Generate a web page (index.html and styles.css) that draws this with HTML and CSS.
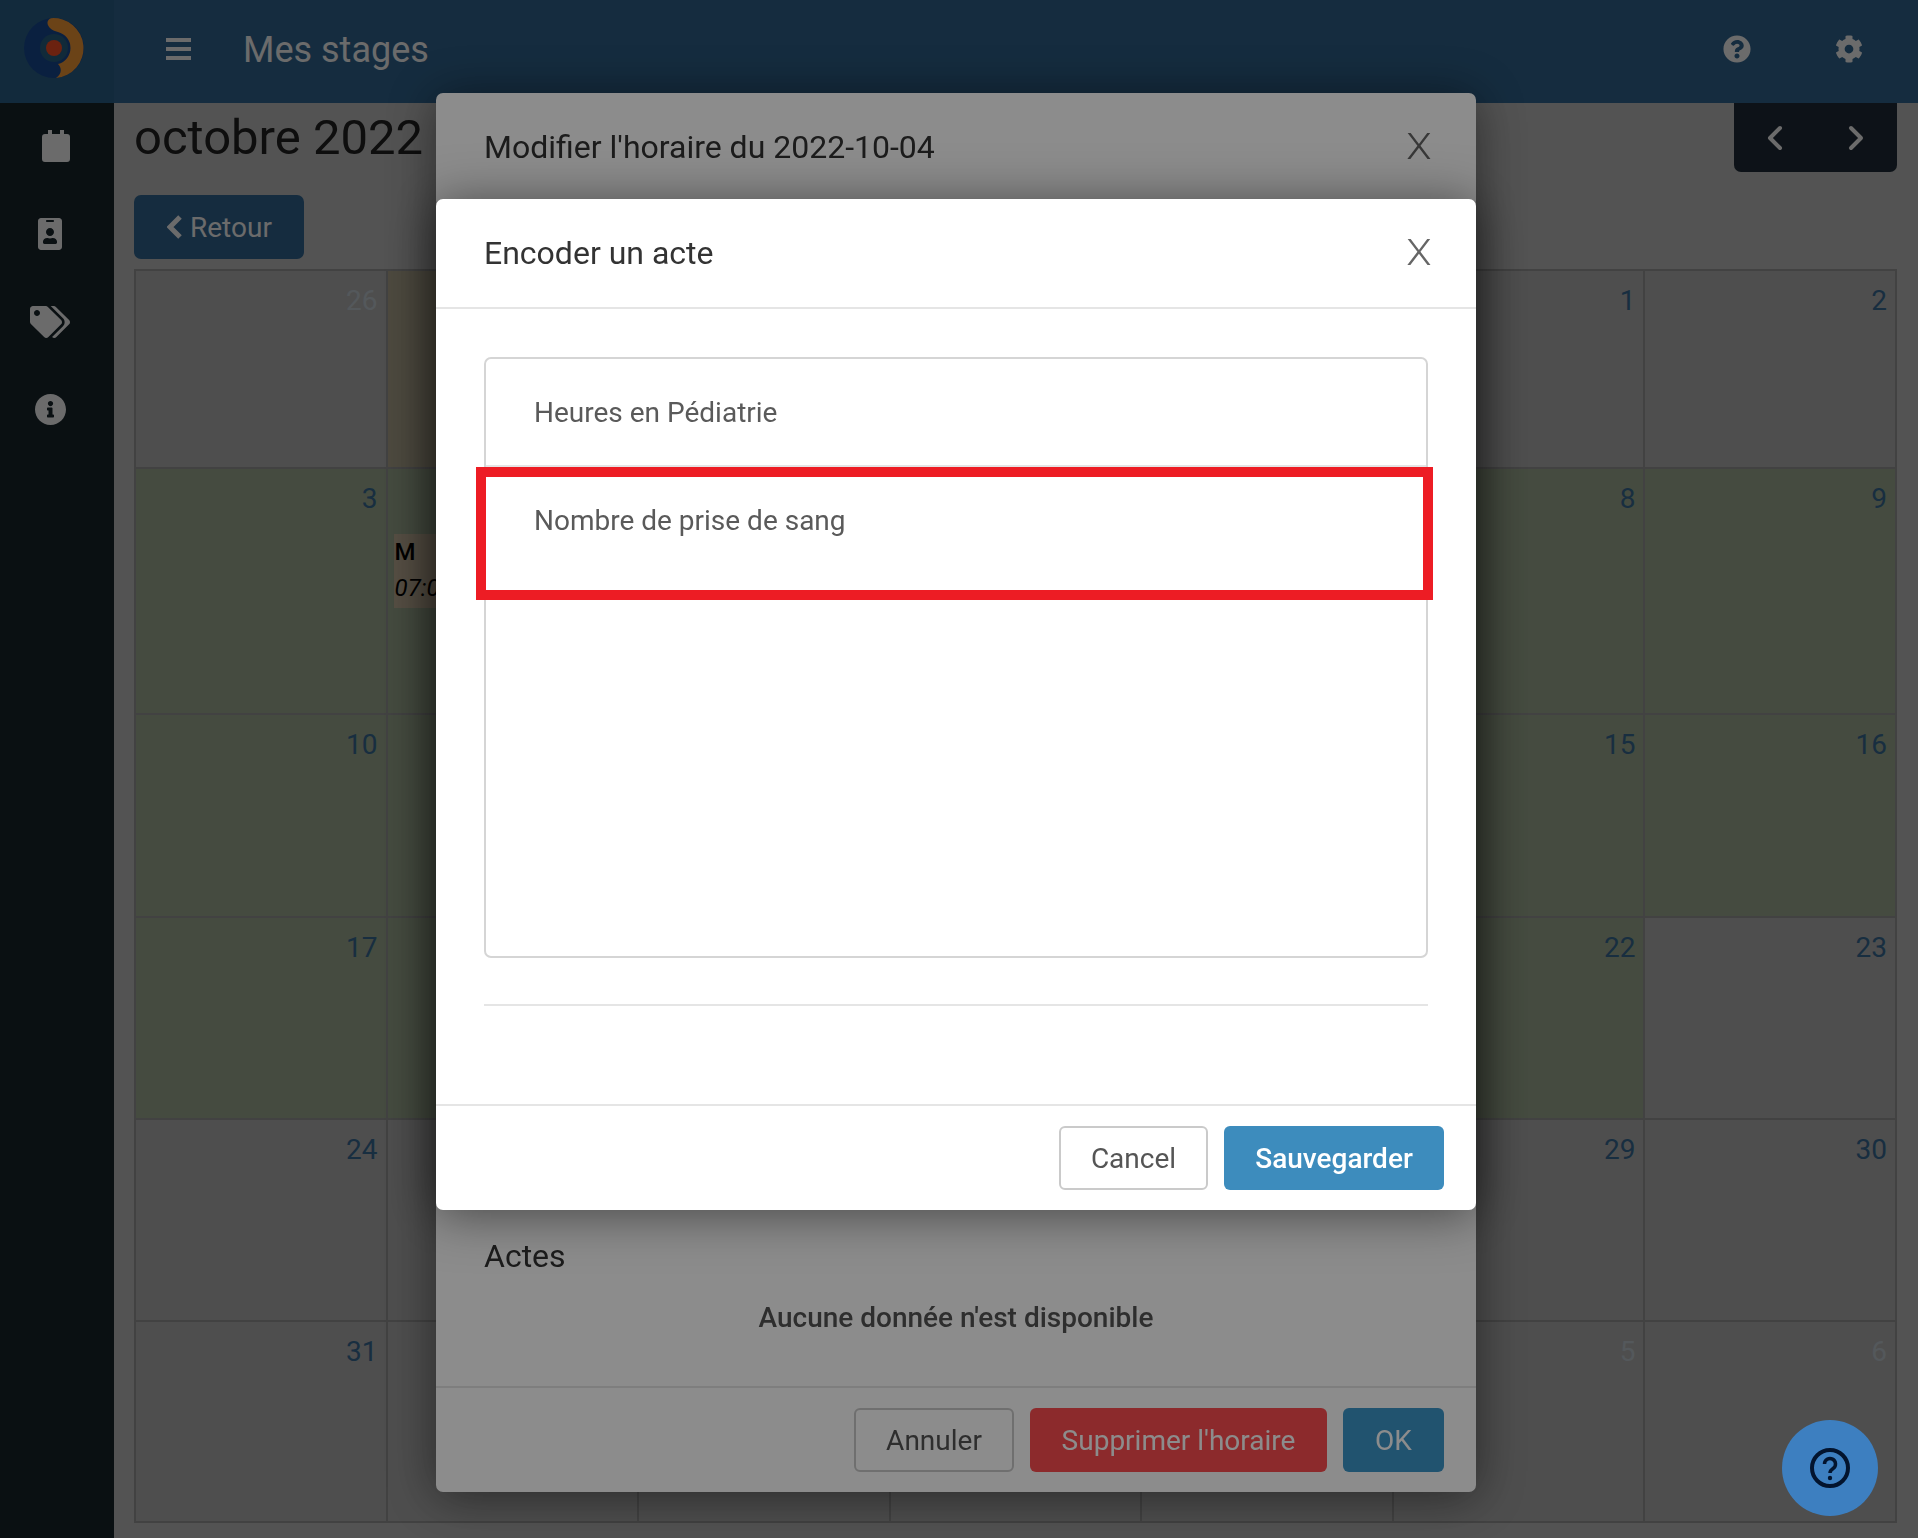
FILE: index.html
```html
<!DOCTYPE html>
<html lang="fr">
<head>
    <meta charset="UTF-8">
    <meta name="viewport" content="width=device-width, initial-scale=1.0">
    <title>Mes stages</title>
    <link rel="stylesheet" href="styles.css">
</head>
<body>

    <div class="page">
        <div class="logo-cell">
            <svg class="logo" viewBox="0 0 60 60">
                <circle class="logo-navy" cx="30" cy="30" r="30"/>
                <path class="logo-orange" d="M27 .2A30 30 0 0 1 32 60C38 56 38 50 34 46A16.500 16.500 0 0 0 34 14C24 12 20 3 27 .2Z"/>
                <circle class="logo-ring" cx="30" cy="30" r="14"/>
                <circle class="logo-dot" cx="30" cy="30" r="8"/>
            </svg>
        </div>

        <header class="topbar">
            <svg class="burger" viewBox="0 0 25 22"><path d="M0 0h25v4H0zM0 9h25v4H0zM0 18h25v4H0z"/></svg>
            <span class="topbar-title">Mes stages</span>
            <div class="topbar-icons">
                <svg class="top-icon" viewBox="0 0 512 512"><path d="M504 256c0 136.997-111.043 248-248 248S8 392.997 8 256C8 119.083 119.043 8 256 8s248 111.083 248 248zM262.655 90c-54.497 0-89.255 22.957-116.549 63.758-3.536 5.286-2.353 12.415 2.715 16.258l34.699 26.31c5.205 3.947 12.621 3.008 16.665-2.122 17.864-22.658 30.113-35.797 57.303-35.797 20.429 0 45.698 13.148 45.698 32.958 0 14.976-12.363 22.667-32.534 33.976C247.128 238.528 216 254.941 216 296v4c0 6.627 5.373 12 12 12h56c6.627 0 12-5.373 12-12v-1.333c0-28.462 83.186-29.647 83.186-106.667 0-58.002-60.165-102-116.531-102zM256 338c-25.365 0-46 20.635-46 46 0 25.364 20.635 46 46 46s46-20.636 46-46c0-25.365-20.635-46-46-46z"/></svg>
                <svg class="top-icon" viewBox="0 0 512 512"><path d="M487.4 315.7l-42.6-24.6c4.3-23.2 4.3-47 0-70.2l42.6-24.6c4.9-2.8 7.1-8.6 5.5-14-11.1-35.6-30-67.8-54.7-94.6-3.8-4.1-10-5.1-14.8-2.3L380.8 110c-17.9-15.4-38.5-27.3-60.8-35.1V25.8c0-5.6-3.9-10.5-9.4-11.7-36.7-8.2-74.3-7.8-109.2 0-5.5 1.2-9.4 6.1-9.4 11.7V75c-22.2 7.9-42.8 19.8-60.8 35.1L88.7 85.5c-4.9-2.8-11-1.9-14.8 2.3-24.7 26.7-43.6 58.9-54.7 94.6-1.7 5.4.6 11.2 5.5 14L67.3 221c-4.3 23.2-4.3 47 0 70.2l-42.6 24.6c-4.9 2.8-7.1 8.6-5.5 14 11.1 35.6 30 67.8 54.7 94.6 3.8 4.1 10 5.1 14.8 2.3l42.6-24.6c17.9 15.4 38.5 27.3 60.8 35.1v49.2c0 5.6 3.9 10.5 9.4 11.7 36.7 8.2 74.3 7.8 109.2 0 5.5-1.2 9.4-6.1 9.4-11.7v-49.2c22.2-7.9 42.8-19.8 60.8-35.1l42.6 24.6c4.9 2.8 11 1.9 14.8-2.3 24.7-26.7 43.6-58.9 54.7-94.6 1.5-5.5-.7-11.3-5.6-14.1zM256 336c-44.1 0-80-35.9-80-80s35.9-80 80-80 80 35.9 80 80-35.9 80-80 80z"/></svg>
            </div>
        </header>

        <nav class="sidebar">
            <svg class="side-calendar" viewBox="0 0 28 32"><path d="M6 0h4v4h8V0h4v4h3a3 3 0 0 1 3 3v22a3 3 0 0 1-3 3H3a3 3 0 0 1-3-3V7a3 3 0 0 1 3-3h3z"/></svg>
            <svg class="side-badge" viewBox="0 0 384 512"><path d="M336 0H48C21.5 0 0 21.5 0 48v416c0 26.5 21.5 48 48 48h288c26.5 0 48-21.5 48-48V48c0-26.5-21.5-48-48-48zM144 32h96c8.8 0 16 7.2 16 16s-7.2 16-16 16h-96c-8.8 0-16-7.2-16-16s7.2-16 16-16zm48 128c35.3 0 64 28.7 64 64s-28.7 64-64 64-64-28.7-64-64 28.7-64 64-64zm112 236.8c0 10.6-10 19.2-22.4 19.2H102.4C90 416 80 407.4 80 396.8v-19.2c0-31.8 30.1-57.6 67.2-57.6h5c12.3 5.1 25.7 8 39.8 8s27.6-2.9 39.8-8h5c37.1 0 67.2 25.8 67.2 57.6v19.2z"/></svg>
            <svg class="side-tags" viewBox="0 0 640 512"><path d="M497.941 225.941L286.059 14.059A48 48 0 0 0 252.118 0H48C21.49 0 0 21.49 0 48v204.118a48 48 0 0 0 14.059 33.941l211.882 211.882c18.744 18.745 49.136 18.746 67.882 0l204.118-204.118c18.745-18.745 18.745-49.137 0-67.882zM112 160c-26.51 0-48-21.49-48-48s21.49-48 48-48 48 21.49 48 48-21.49 48-48 48zm513.941 133.823L421.823 497.941c-18.745 18.745-49.137 18.745-67.882 0l-.36-.36L527.64 323.522c16.999-16.999 26.36-39.6 26.36-63.64s-9.362-46.641-26.36-63.64L331.397 0h48.721a48 48 0 0 1 33.941 14.059l211.882 211.882c18.745 18.745 18.745 49.137 0 67.882z"/></svg>
            <svg class="side-info" viewBox="8 8 496 496"><path d="M256 8C119.043 8 8 119.083 8 256c0 136.997 111.043 248 248 248s248-111.003 248-248C504 119.083 392.957 8 256 8zm0 110c23.196 0 42 18.804 42 42s-18.804 42-42 42-42-18.804-42-42 18.804-42 42-42zm56 254c0 6.627-5.373 12-12 12h-88c-6.627 0-12-5.373-12-12v-24c0-6.627 5.373-12 12-12h12v-64h-12c-6.627 0-12-5.373-12-12v-24c0-6.627 5.373-12 12-12h64c6.627 0 12 5.373 12 12v100h12c6.627 0 12 5.373 12 12v24z"/></svg>
        </nav>

        <main class="content">
            <div class="toolbar">
                <h1>octobre 2022</h1>
                <div class="month-nav">
                    <svg viewBox="0 0 16 26"><path d="M13 3L3 13l10 10"/></svg>
                    <svg viewBox="0 0 16 26"><path d="M3 3l10 10L3 23"/></svg>
                </div>
            </div>

            <a href="#" class="btn-back">
                <svg viewBox="0 0 16 26"><path d="M13 3L3 13l10 10"/></svg>
                Retour
            </a>

            <div class="calendar">
                <div class="day"><span class="num faded">26</span></div>
                <div class="day tan"><span class="num faded">27</span></div>
                <div class="day"><span class="num faded">28</span></div>
                <div class="day"><span class="num faded">29</span></div>
                <div class="day"><span class="num faded">30</span></div>
                <div class="day"><span class="num">1</span></div>
                <div class="day"><span class="num">2</span></div>

                <div class="day green"><span class="num">3</span></div>
                <div class="day green">
                    <span class="num">4</span>
                    <div class="event"><strong>M</strong><em>07:00</em></div>
                </div>
                <div class="day green"><span class="num">5</span></div>
                <div class="day green"><span class="num">6</span></div>
                <div class="day green"><span class="num">7</span></div>
                <div class="day green"><span class="num">8</span></div>
                <div class="day green"><span class="num">9</span></div>

                <div class="day green"><span class="num">10</span></div>
                <div class="day green"><span class="num">11</span></div>
                <div class="day green"><span class="num">12</span></div>
                <div class="day green"><span class="num">13</span></div>
                <div class="day green"><span class="num">14</span></div>
                <div class="day green"><span class="num">15</span></div>
                <div class="day green"><span class="num">16</span></div>

                <div class="day green"><span class="num">17</span></div>
                <div class="day green"><span class="num">18</span></div>
                <div class="day green"><span class="num">19</span></div>
                <div class="day green"><span class="num">20</span></div>
                <div class="day green"><span class="num">21</span></div>
                <div class="day green"><span class="num">22</span></div>
                <div class="day"><span class="num">23</span></div>

                <div class="day"><span class="num">24</span></div>
                <div class="day"><span class="num">25</span></div>
                <div class="day"><span class="num">26</span></div>
                <div class="day"><span class="num">27</span></div>
                <div class="day"><span class="num">28</span></div>
                <div class="day"><span class="num">29</span></div>
                <div class="day"><span class="num">30</span></div>

                <div class="day"><span class="num">31</span></div>
                <div class="day"><span class="num faded">1</span></div>
                <div class="day"><span class="num faded">2</span></div>
                <div class="day"><span class="num faded">3</span></div>
                <div class="day"><span class="num faded">4</span></div>
                <div class="day"><span class="num faded">5</span></div>
                <div class="day"><span class="num faded">6</span></div>
            </div>
        </main>
    </div>

    <!-- premier dialogue -->
    <div class="backdrop backdrop-light"></div>
    <section class="modal modal-schedule">
        <div class="modal-head">
            <h2>Modifier l'horaire du 2022-10-04</h2>
            <span class="close">X</span>
        </div>
        <div class="schedule-body">
            <h3>Actes</h3>
            <p class="empty">Aucune donnée n'est disponible</p>
        </div>
        <div class="modal-foot">
            <button class="btn btn-ghost btn-annuler">Annuler</button>
            <button class="btn btn-danger">Supprimer l'horaire</button>
            <button class="btn btn-ok">OK</button>
        </div>
    </section>

    <!-- second dialogue -->
    <div class="backdrop backdrop-dark"></div>
    <section class="modal modal-acte">
        <div class="modal-head">
            <h2>Encoder un acte</h2>
            <span class="close">X</span>
        </div>
        <div class="acte-body">
            <div class="list-box">
                <div class="list-row">Heures en Pédiatrie</div>
                <div class="list-row">Nombre de prise de sang</div>
                <div class="red-mark"></div>
            </div>
            <hr class="acte-rule">
        </div>
        <div class="modal-foot">
            <button class="btn btn-ghost btn-cancel">Cancel</button>
            <button class="btn btn-save">Sauvegarder</button>
        </div>
    </section>

    <a href="#" class="help-fab">
        <svg viewBox="0 0 40 40">
            <circle class="fab-ring" cx="20" cy="20" r="18"/>
            <path class="fab-mark" d="M14.500 16a5.500 5.500 0 1 1 8.600 4.500c-2 1.400-3.100 2.400-3.100 4.500"/>
            <circle class="fab-dot" cx="20" cy="30" r="2.200"/>
        </svg>
    </a>

</body>
</html>
```

FILE: styles.css
```css
* {
    margin: 0;
    padding: 0;
    box-sizing: border-box;
}

body {
    font-family: 'Roboto', 'Liberation Sans', sans-serif;
    background: #c6c6c6;
    color: #333;
    width: 1918px;
    height: 1538px;
    overflow: hidden;
}

.page {
    display: grid;
    grid-template-columns: 114px 1fr;
    grid-template-rows: 103px 1fr;
    height: 100%;
}

/* top */

.logo-cell {
    background: #2d648f;
    display: flex;
    align-items: center;
    padding-left: 24px;
    padding-bottom: 7px;
}

.logo {
    width: 60px;
    height: 60px;
}

.logo-navy { fill: #184d99; }
.logo-orange { fill: #ff9f38; }
.logo-ring { fill: #2a6488; }
.logo-dot { fill: #ff5126; }

.topbar {
    background: #326996;
    display: flex;
    align-items: center;
    color: #fff;
    padding-left: 52px;
}

.burger {
    width: 25px;
    height: 22px;
    fill: #fff;
    margin-right: 52px;
    margin-bottom: 5px;
}

.topbar-title {
    font-size: 36px;
    padding-bottom: 4px;
}

.topbar-icons {
    margin-left: auto;
    display: flex;
    gap: 84px;
    padding-right: 55px;
    padding-bottom: 5px;
}

.top-icon {
    width: 28px;
    height: 28px;
    fill: #fff;
}

/* sidebar */

.sidebar {
    background: #18262d;
    display: flex;
    flex-direction: column;
    align-items: center;
    padding: 27px 14px 0 0;
}

.sidebar svg {
    fill: #fff;
    display: block;
}

.side-calendar {
    width: 28px;
    height: 32px;
    margin-left: 12px;
}

.side-badge {
    width: 24px;
    height: 32px;
    margin-top: 56px;
}

.side-tags {
    width: 40px;
    height: 32px;
    margin-top: 56px;
}

.side-info {
    width: 31px;
    height: 31px;
    margin-top: 56px;
}

/* contenu */

.content {
    padding: 0 21px 0 20px;
}

.toolbar {
    display: flex;
    justify-content: space-between;
    align-items: center;
    height: 69px;
}

h1 {
    font-size: 49px;
    font-weight: 400;
    color: #222;
}

.month-nav {
    width: 163px;
    height: 69px;
    background: #212d39;
    border-radius: 0 0 7px 7px;
    display: flex;
    justify-content: space-between;
    align-items: center;
    padding: 0 33px;
}

.month-nav svg {
    width: 16px;
    height: 26px;
    fill: none;
    stroke: #fff;
    stroke-width: 4;
    stroke-linecap: round;
    stroke-linejoin: round;
}

.btn-back {
    display: flex;
    align-items: center;
    gap: 7px;
    width: 170px;
    height: 64px;
    margin-top: 23px;
    padding-left: 33px;
    background: #326996;
    border-radius: 7px;
    color: #fff;
    font-size: 28px;
    text-decoration: none;
}

.btn-back svg {
    width: 16px;
    height: 26px;
    fill: none;
    stroke: #fff;
    stroke-width: 5;
}

.calendar {
    display: grid;
    grid-template-columns: repeat(7, 1fr);
    grid-template-rows: 198px 246px 203px 202px 202px 201px;
    margin-top: 10px;
    border-top: 2px solid #9d9d9d;
    border-left: 2px solid #9d9d9d;
}

.day {
    background: #bababa;
    border-right: 2px solid #9d9d9d;
    border-bottom: 2px solid #9d9d9d;
    padding: 14px 8px 0 6px;
    overflow: hidden;
}

.day.green { background: #a4b398; }
.day.tan { background: #b8b097; }

.num {
    display: block;
    text-align: right;
    font-size: 28px;
    line-height: 32px;
    color: #3a6f9a;
}

.num.faded { color: #c8d2da; }

.event {
    background: #cdbca2;
    height: 74px;
    margin-top: 19px;
    padding: 0 1px;
    color: #000;
    font-size: 24px;
}

.event strong,
.event em {
    display: block;
    line-height: 36px;
}

.event strong {
    font-weight: 500;
}

/* dialogues */

.backdrop {
    position: fixed;
    inset: 0;
}

.backdrop-light { background: rgba(0, 0, 0, 0.24); }
.backdrop-dark { background: rgba(0, 0, 0, 0.45); }

.modal {
    position: fixed;
    left: 436px;
    width: 1040px;
    background: #fff;
    border-radius: 7px;
    box-shadow: 0 4px 50px rgba(0, 0, 0, 0.5);
    display: flex;
    flex-direction: column;
}

.modal-schedule {
    top: 93px;
    height: 1399px;
}

.modal-acte {
    top: 199px;
    height: 1011px;
}

.modal-head {
    display: flex;
    justify-content: space-between;
    align-items: center;
    height: 110px;
    padding: 0 46px 0 48px;
    border-bottom: 2px solid #e5e5e5;
}

h2 {
    font-size: 32px;
    font-weight: 400;
    color: #333;
}

.close {
    font-size: 36px;
    font-weight: 300;
    color: #666;
    transform: scaleX(1.15);
}

.schedule-body {
    flex: 1;
    display: flex;
    flex-direction: column;
    justify-content: flex-end;
    padding: 0 48px 52px;
}

h3 {
    font-size: 32px;
    font-weight: 400;
    color: #333;
}

.empty {
    font-size: 28px;
    font-weight: 500;
    color: #555;
    text-align: center;
    margin-top: 26px;
}

.modal-foot {
    display: flex;
    justify-content: flex-end;
    gap: 16px;
    height: 106px;
    padding: 20px 32px 0 0;
    border-top: 2px solid #e5e5e5;
}

.btn {
    height: 64px;
    font-family: inherit;
    font-size: 28px;
    border-radius: 6px;
    border: 0;
    color: #fff;
}

.btn-ghost {
    background: #fff;
    border: 2px solid #cacaca;
    color: #555;
}

.btn-annuler {
    width: 160px;
}

.btn-cancel {
    width: 149px;
}

.btn-danger {
    width: 297px;
    background: #ff4e50;
}

.btn-ok {
    width: 101px;
    background: #3c97cb;
}

.btn-save {
    width: 220px;
    background: #3d8cbd;
    font-weight: 500;
}

.acte-body {
    flex: 1;
    padding: 48px 48px 0;
}

.list-box {
    position: relative;
    height: 601px;
    border: 2px solid #d5d5d5;
    border-radius: 7px;
}

.list-row {
    height: 108px;
    padding: 36px 48px 0;
    font-size: 28px;
    line-height: 36px;
    color: #5a5a5a;
    border-bottom: 2px solid #e5e5e5;
}

.list-row + .list-row {
    border-bottom: 0;
}

.red-mark {
    position: absolute;
    left: -10px;
    top: 108px;
    width: 957px;
    height: 133px;
    border: 10px solid #ed1c24;
}

.acte-rule {
    border: 0;
    border-top: 2px solid #e5e5e5;
    margin-top: 46px;
}

.help-fab {
    position: fixed;
    left: 1782px;
    top: 1420px;
    width: 96px;
    height: 96px;
    border-radius: 50%;
    background: #3d7fc0;
    display: flex;
    align-items: center;
    justify-content: center;
}

.help-fab svg {
    width: 40px;
    height: 40px;
}

.fab-ring {
    fill: none;
    stroke: #03142e;
    stroke-width: 4;
}

.fab-mark {
    fill: none;
    stroke: #03142e;
    stroke-width: 3.500;
}

.fab-dot {
    fill: #03142e;
}
```
